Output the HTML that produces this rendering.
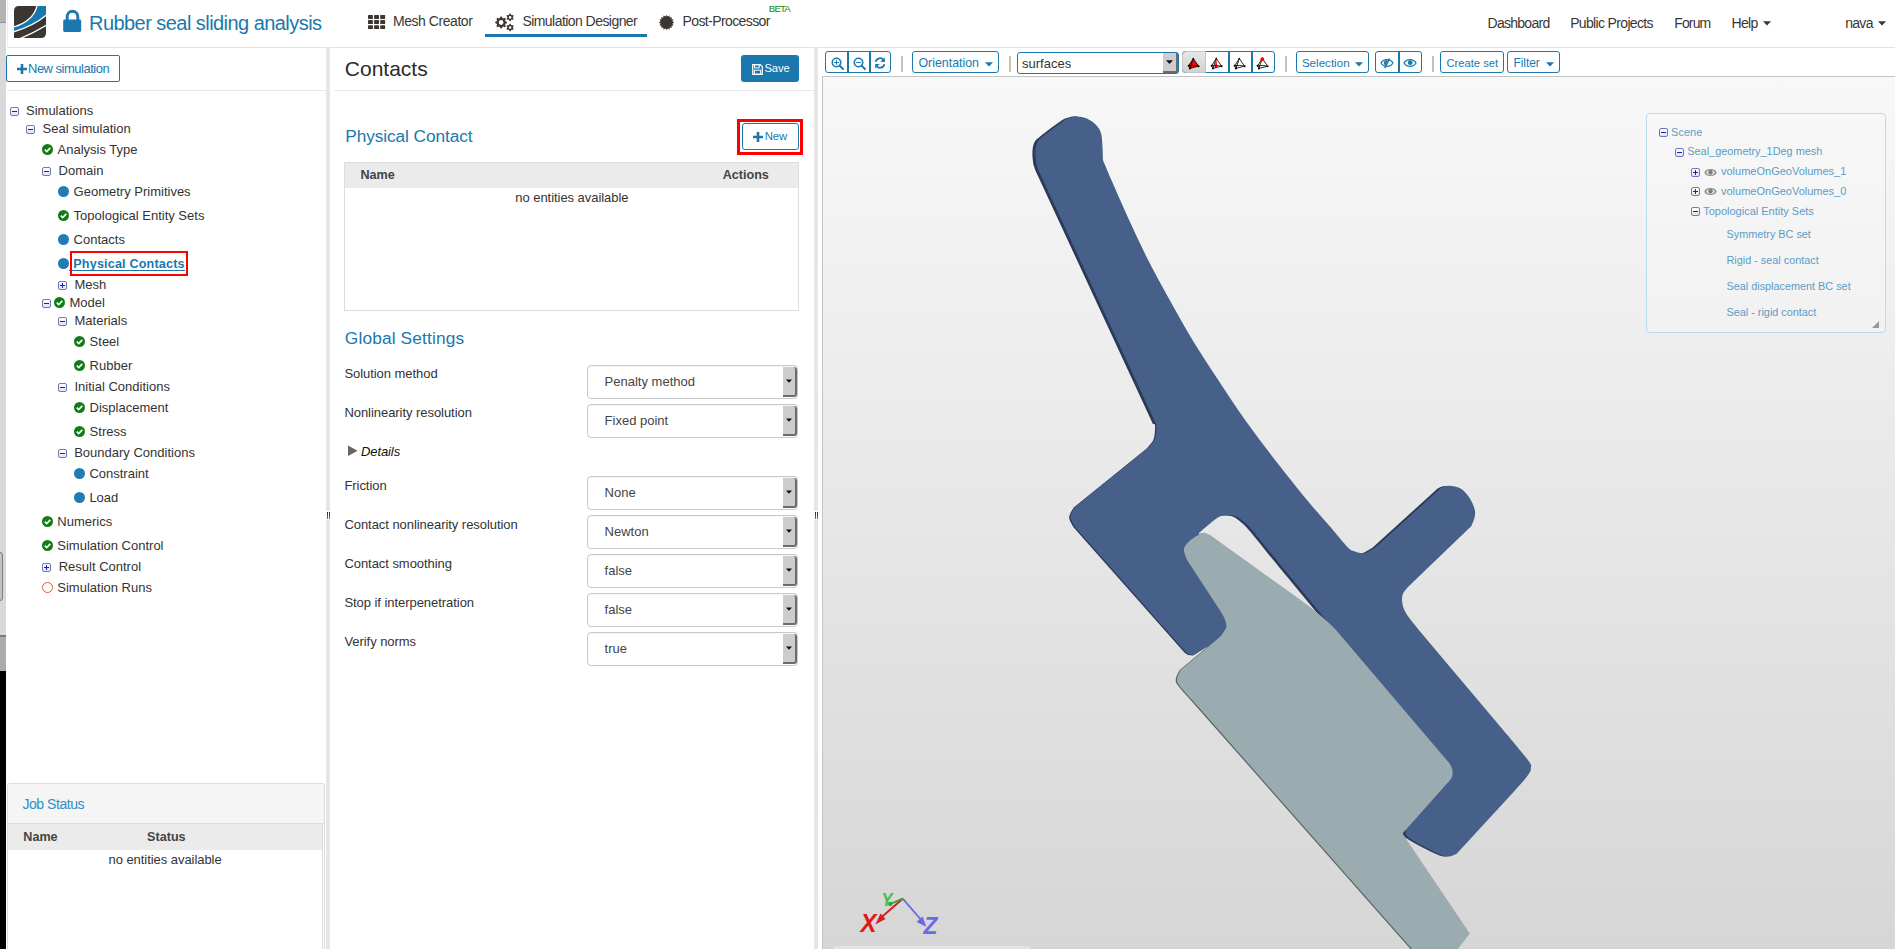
<!DOCTYPE html>
<html><head><meta charset="utf-8"><style>
html,body{margin:0;padding:0;width:1895px;height:949px;overflow:hidden;background:#fff;font-family:"Liberation Sans",sans-serif;}
.t{position:absolute;line-height:1;white-space:nowrap;}
</style></head><body>
<div style="position:absolute;left:0px;top:0px;width:6px;height:22px;background:#b3b3b3"></div>
<div style="position:absolute;left:0px;top:22px;width:6px;height:1px;background:#8f8f8f"></div>
<div style="position:absolute;left:0px;top:23px;width:6px;height:612px;background:#d9d9d9"></div>
<div style="position:absolute;left:0px;top:635px;width:6px;height:2px;background:#7a7a7a"></div>
<div style="position:absolute;left:0px;top:637px;width:6px;height:34px;background:#ababab"></div>
<div style="position:absolute;left:0px;top:671px;width:6px;height:278px;background:#000"></div>
<div style="position:absolute;left:-7px;top:552px;width:8px;height:47px;border:1.5px solid #7d7d7d;border-radius:3px;background:#c2c2c2"></div>
<div style="position:absolute;left:7px;top:0;width:1888px;height:48px;background:#fff;border-bottom:1px solid #e3e3e3;border-left:1px solid #eee;border-bottom-left-radius:3px;box-sizing:border-box"></div>
<svg style="position:absolute;left:14px;top:6px" width="32" height="32" viewBox="0 0 32 32">
<defs><clipPath id="lc"><path d="M5 0 H32 V27 Q32 32 27 32 H0 V5 Q0 0 5 0Z"/></clipPath></defs>
<g clip-path="url(#lc)">
<rect x="0" y="0" width="32" height="32" fill="#3b3632"/>
<path d="M23.2 -1 Q 20 15 -1 21.2 L -1 26 Q 20 20 33 8.6 L 33 -1 Z" fill="#1878ae"/>
<path d="M23.2 -1 Q 20 15 -1 21.2" stroke="#fff" stroke-width="1.3" fill="none"/>
<path d="M-1 26 Q 20 20 33 8.6" stroke="#fff" stroke-width="1.3" fill="none"/>
<path d="M33 19 Q 20 27 6 32.5" stroke="#fff" stroke-width="1.3" fill="none"/>
</g></svg>
<svg style="position:absolute;left:63px;top:9px" width="19" height="24" viewBox="0 0 19 24">
<path d="M4.2 11 V7.6 A5.3 5.3 0 0 1 14.8 7.6 V11" stroke="#1a78ae" stroke-width="2.9" fill="none"/>
<rect x="0.2" y="10.6" width="18" height="12.4" rx="1.4" fill="#1a78ae"/></svg>
<div class="t" style="left:89px;top:12.57px;font-size:20px;color:#1a78ae;letter-spacing:-0.55px">Rubber seal sliding analysis</div>
<svg style="position:absolute;left:368px;top:15px" width="18" height="15"><rect x="0.0" y="0.0" width="4.9" height="3.9" rx="0.6" fill="#3b3632"/><rect x="0.0" y="5.1" width="4.9" height="3.9" rx="0.6" fill="#3b3632"/><rect x="0.0" y="10.2" width="4.9" height="3.9" rx="0.6" fill="#3b3632"/><rect x="6.1" y="0.0" width="4.9" height="3.9" rx="0.6" fill="#3b3632"/><rect x="6.1" y="5.1" width="4.9" height="3.9" rx="0.6" fill="#3b3632"/><rect x="6.1" y="10.2" width="4.9" height="3.9" rx="0.6" fill="#3b3632"/><rect x="12.2" y="0.0" width="4.9" height="3.9" rx="0.6" fill="#3b3632"/><rect x="12.2" y="5.1" width="4.9" height="3.9" rx="0.6" fill="#3b3632"/><rect x="12.2" y="10.2" width="4.9" height="3.9" rx="0.6" fill="#3b3632"/></svg>
<div class="t" style="left:393px;top:14.25px;font-size:14px;color:#3b3632;letter-spacing:-0.45px">Mesh Creator</div>
<svg style="position:absolute;left:490px;top:8px" width="30" height="28"><path fill-rule="evenodd" fill="#3b3632" d="M10.51,8.53 L11.69,8.53 L12.44,10.10 L13.27,10.44 L14.91,9.86 L15.74,10.69 L15.16,12.33 L15.50,13.16 L17.07,13.91 L17.07,15.09 L15.50,15.84 L15.16,16.67 L15.74,18.31 L14.91,19.14 L13.27,18.56 L12.44,18.90 L11.69,20.47 L10.51,20.47 L9.76,18.90 L8.93,18.56 L7.29,19.14 L6.46,18.31 L7.04,16.67 L6.70,15.84 L5.13,15.09 L5.13,13.91 L6.70,13.16 L7.04,12.33 L6.46,10.69 L7.29,9.86 L8.93,10.44 L9.76,10.10 Z M13.5,14.5 A2.4,2.4 0 1 0 8.7,14.5 A2.4,2.4 0 1 0 13.5,14.5 Z"/><path fill-rule="evenodd" fill="#3b3632" d="M19.59,5.53 L20.61,5.53 L21.17,6.81 L21.80,7.18 L23.19,7.03 L23.70,7.91 L22.88,9.03 L22.88,9.77 L23.70,10.89 L23.19,11.77 L21.80,11.62 L21.17,11.99 L20.61,13.27 L19.59,13.27 L19.03,11.99 L18.40,11.62 L17.01,11.77 L16.50,10.89 L17.32,9.77 L17.32,9.03 L16.50,7.91 L17.01,7.03 L18.40,7.18 L19.03,6.81 Z M21.400000000000002,9.4 A1.3,1.3 0 1 0 18.8,9.4 A1.3,1.3 0 1 0 21.400000000000002,9.4 Z"/><path fill-rule="evenodd" fill="#3b3632" d="M19.59,15.63 L20.61,15.63 L21.17,16.91 L21.80,17.28 L23.19,17.13 L23.70,18.01 L22.88,19.13 L22.88,19.87 L23.70,20.99 L23.19,21.87 L21.80,21.72 L21.17,22.09 L20.61,23.37 L19.59,23.37 L19.03,22.09 L18.40,21.72 L17.01,21.87 L16.50,20.99 L17.32,19.87 L17.32,19.13 L16.50,18.01 L17.01,17.13 L18.40,17.28 L19.03,16.91 Z M21.400000000000002,19.5 A1.3,1.3 0 1 0 18.8,19.5 A1.3,1.3 0 1 0 21.400000000000002,19.5 Z"/></svg>
<div class="t" style="left:522.4px;top:14.25px;font-size:14px;color:#3b3632;letter-spacing:-0.55px">Simulation Designer</div>
<div style="position:absolute;left:485px;top:34px;width:162px;height:3px;background:#1a78ae"></div>
<svg style="position:absolute;left:652px;top:8px" width="29" height="29"><path fill="#3b3632" d="M22.10,14.50 L20.38,15.67 L21.52,17.41 L19.49,17.83 L19.87,19.87 L17.83,19.49 L17.41,21.52 L15.67,20.38 L14.50,22.10 L13.33,20.38 L11.59,21.52 L11.17,19.49 L9.13,19.87 L9.51,17.83 L7.48,17.41 L8.62,15.67 L6.90,14.50 L8.62,13.33 L7.48,11.59 L9.51,11.17 L9.13,9.13 L11.17,9.51 L11.59,7.48 L13.33,8.62 L14.50,6.90 L15.67,8.62 L17.41,7.48 L17.83,9.51 L19.87,9.13 L19.49,11.17 L21.52,11.59 L20.38,13.33 Z"/></svg>
<div class="t" style="left:682.5px;top:14.25px;font-size:14px;color:#3b3632;letter-spacing:-0.6px">Post-Processor</div>
<div class="t" style="left:768.8px;top:3.80px;font-size:9.8px;color:#0f8a12;letter-spacing:-0.95px">BETA</div>
<div class="t" style="left:1487.5px;top:15.65px;font-size:14px;color:#3b3632;letter-spacing:-0.72px">Dashboard</div>
<div class="t" style="left:1570.2px;top:15.65px;font-size:14px;color:#3b3632;letter-spacing:-0.66px">Public Projects</div>
<div class="t" style="left:1674.2px;top:15.65px;font-size:14px;color:#3b3632;letter-spacing:-0.85px">Forum</div>
<div class="t" style="left:1731.4px;top:15.65px;font-size:14px;color:#3b3632;letter-spacing:-0.6px">Help</div>
<svg style="position:absolute;left:1763px;top:21px" width="9" height="5"><path d="M0 0.3 H8 L4 4.5 Z" fill="#3b3632"/></svg>
<div class="t" style="left:1845.2px;top:15.65px;font-size:14px;color:#3b3632;letter-spacing:-0.7px">nava</div>
<svg style="position:absolute;left:1878px;top:21px" width="9" height="5"><path d="M0 0.3 H8 L4 4.5 Z" fill="#3b3632"/></svg>
<div style="position:absolute;left:326px;top:47px;width:4px;height:902px;background:#e6e6e6"></div>
<div style="position:absolute;left:7px;top:90px;width:319px;height:1px;background:#e5e5e5"></div>
<div style="position:absolute;left:6px;top:55px;width:114px;height:27px;border:1px solid #1a78ae;border-radius:2px;box-sizing:border-box;background:#fff"></div>
<svg style="position:absolute;left:17px;top:64px" width="10" height="10"><path d="M3.7 0H6.3V3.7H10V6.3H6.3V10H3.7V6.3H0V3.7H3.7Z" fill="#1a78ae"/></svg>
<div class="t" style="left:28px;top:62.00px;font-size:13px;color:#1a78ae;letter-spacing:-0.5px">New simulation</div>
<div style="position:absolute;left:10px;top:107px;width:9px;height:9px;box-sizing:border-box;border:1.2px solid #7079b8;border-radius:2px;background:linear-gradient(#fff,#e2e4ec)"></div><div style="position:absolute;left:12px;top:111px;width:5px;height:1.3px;background:#1a1acc"></div>
<div class="t" style="left:26px;top:104.00px;font-size:13px;color:#333;">Simulations</div>
<div style="position:absolute;left:26px;top:125px;width:9px;height:9px;box-sizing:border-box;border:1.2px solid #7079b8;border-radius:2px;background:linear-gradient(#fff,#e2e4ec)"></div><div style="position:absolute;left:28px;top:129px;width:5px;height:1.3px;background:#1a1acc"></div>
<div class="t" style="left:42.5px;top:122.00px;font-size:13px;color:#333;">Seal simulation</div>
<svg style="position:absolute;left:42px;top:144px" width="11" height="11" viewBox="0 0 11 11"><circle cx="5.5" cy="5.5" r="5.5" fill="#0f7d12"/><path d="M2.8 5.6 L4.7 7.5 L8.3 3.9" stroke="#fff" stroke-width="1.7" fill="none"/></svg>
<div class="t" style="left:57.5px;top:143.00px;font-size:13px;color:#333;">Analysis Type</div>
<div style="position:absolute;left:42px;top:167px;width:9px;height:9px;box-sizing:border-box;border:1.2px solid #7079b8;border-radius:2px;background:linear-gradient(#fff,#e2e4ec)"></div><div style="position:absolute;left:44px;top:171px;width:5px;height:1.3px;background:#1a1acc"></div>
<div class="t" style="left:58.6px;top:164.00px;font-size:13px;color:#333;">Domain</div>
<div style="position:absolute;left:58px;top:186px;width:11px;height:11px;border-radius:50%;background:#1f7cb5"></div>
<div class="t" style="left:73.6px;top:185.20px;font-size:13px;color:#333;">Geometry Primitives</div>
<svg style="position:absolute;left:58px;top:210px" width="11" height="11" viewBox="0 0 11 11"><circle cx="5.5" cy="5.5" r="5.5" fill="#0f7d12"/><path d="M2.8 5.6 L4.7 7.5 L8.3 3.9" stroke="#fff" stroke-width="1.7" fill="none"/></svg>
<div class="t" style="left:73.6px;top:209.00px;font-size:13px;color:#333;">Topological Entity Sets</div>
<div style="position:absolute;left:58px;top:234px;width:11px;height:11px;border-radius:50%;background:#1f7cb5"></div>
<div class="t" style="left:73.6px;top:232.70px;font-size:13px;color:#333;">Contacts</div>
<div style="position:absolute;left:58px;top:258px;width:11px;height:11px;border-radius:50%;background:#1f7cb5"></div>
<div style="position:absolute;left:58px;top:281px;width:9px;height:9px;box-sizing:border-box;border:1.2px solid #7079b8;border-radius:2px;background:linear-gradient(#fff,#e2e4ec)"></div><div style="position:absolute;left:60px;top:285px;width:5px;height:1.3px;background:#1a1acc"></div><div style="position:absolute;left:61.85px;top:283px;width:1.3px;height:5px;background:#1a1acc"></div>
<div class="t" style="left:74.5px;top:277.90px;font-size:13px;color:#333;">Mesh</div>
<div style="position:absolute;left:42px;top:299px;width:9px;height:9px;box-sizing:border-box;border:1.2px solid #7079b8;border-radius:2px;background:linear-gradient(#fff,#e2e4ec)"></div><div style="position:absolute;left:44px;top:303px;width:5px;height:1.3px;background:#1a1acc"></div>
<svg style="position:absolute;left:54px;top:297px" width="11" height="11" viewBox="0 0 11 11"><circle cx="5.5" cy="5.5" r="5.5" fill="#0f7d12"/><path d="M2.8 5.6 L4.7 7.5 L8.3 3.9" stroke="#fff" stroke-width="1.7" fill="none"/></svg>
<div class="t" style="left:69.5px;top:295.70px;font-size:13px;color:#333;">Model</div>
<div style="position:absolute;left:58px;top:317px;width:9px;height:9px;box-sizing:border-box;border:1.2px solid #7079b8;border-radius:2px;background:linear-gradient(#fff,#e2e4ec)"></div><div style="position:absolute;left:60px;top:321px;width:5px;height:1.3px;background:#1a1acc"></div>
<div class="t" style="left:74.5px;top:313.80px;font-size:13px;color:#333;">Materials</div>
<svg style="position:absolute;left:74px;top:336px" width="11" height="11" viewBox="0 0 11 11"><circle cx="5.5" cy="5.5" r="5.5" fill="#0f7d12"/><path d="M2.8 5.6 L4.7 7.5 L8.3 3.9" stroke="#fff" stroke-width="1.7" fill="none"/></svg>
<div class="t" style="left:89.6px;top:334.90px;font-size:13px;color:#333;">Steel</div>
<svg style="position:absolute;left:74px;top:360px" width="11" height="11" viewBox="0 0 11 11"><circle cx="5.5" cy="5.5" r="5.5" fill="#0f7d12"/><path d="M2.8 5.6 L4.7 7.5 L8.3 3.9" stroke="#fff" stroke-width="1.7" fill="none"/></svg>
<div class="t" style="left:89.6px;top:358.90px;font-size:13px;color:#333;">Rubber</div>
<div style="position:absolute;left:58px;top:383px;width:9px;height:9px;box-sizing:border-box;border:1.2px solid #7079b8;border-radius:2px;background:linear-gradient(#fff,#e2e4ec)"></div><div style="position:absolute;left:60px;top:387px;width:5px;height:1.3px;background:#1a1acc"></div>
<div class="t" style="left:74.5px;top:379.80px;font-size:13px;color:#333;">Initial Conditions</div>
<svg style="position:absolute;left:74px;top:402px" width="11" height="11" viewBox="0 0 11 11"><circle cx="5.5" cy="5.5" r="5.5" fill="#0f7d12"/><path d="M2.8 5.6 L4.7 7.5 L8.3 3.9" stroke="#fff" stroke-width="1.7" fill="none"/></svg>
<div class="t" style="left:89.6px;top:400.60px;font-size:13px;color:#333;">Displacement</div>
<svg style="position:absolute;left:74px;top:426px" width="11" height="11" viewBox="0 0 11 11"><circle cx="5.5" cy="5.5" r="5.5" fill="#0f7d12"/><path d="M2.8 5.6 L4.7 7.5 L8.3 3.9" stroke="#fff" stroke-width="1.7" fill="none"/></svg>
<div class="t" style="left:89.6px;top:424.60px;font-size:13px;color:#333;">Stress</div>
<div style="position:absolute;left:58px;top:449px;width:9px;height:9px;box-sizing:border-box;border:1.2px solid #7079b8;border-radius:2px;background:linear-gradient(#fff,#e2e4ec)"></div><div style="position:absolute;left:60px;top:453px;width:5px;height:1.3px;background:#1a1acc"></div>
<div class="t" style="left:74.2px;top:445.90px;font-size:13px;color:#333;">Boundary Conditions</div>
<div style="position:absolute;left:74px;top:468px;width:11px;height:11px;border-radius:50%;background:#1f7cb5"></div>
<div class="t" style="left:89.4px;top:466.90px;font-size:13px;color:#333;">Constraint</div>
<div style="position:absolute;left:74px;top:492px;width:11px;height:11px;border-radius:50%;background:#1f7cb5"></div>
<div class="t" style="left:89.4px;top:491.00px;font-size:13px;color:#333;">Load</div>
<svg style="position:absolute;left:42px;top:516px" width="11" height="11" viewBox="0 0 11 11"><circle cx="5.5" cy="5.5" r="5.5" fill="#0f7d12"/><path d="M2.8 5.6 L4.7 7.5 L8.3 3.9" stroke="#fff" stroke-width="1.7" fill="none"/></svg>
<div class="t" style="left:57.3px;top:515.00px;font-size:13px;color:#333;">Numerics</div>
<svg style="position:absolute;left:42px;top:540px" width="11" height="11" viewBox="0 0 11 11"><circle cx="5.5" cy="5.5" r="5.5" fill="#0f7d12"/><path d="M2.8 5.6 L4.7 7.5 L8.3 3.9" stroke="#fff" stroke-width="1.7" fill="none"/></svg>
<div class="t" style="left:57.3px;top:539.00px;font-size:13px;color:#333;">Simulation Control</div>
<div style="position:absolute;left:42px;top:563px;width:9px;height:9px;box-sizing:border-box;border:1.2px solid #7079b8;border-radius:2px;background:linear-gradient(#fff,#e2e4ec)"></div><div style="position:absolute;left:44px;top:567px;width:5px;height:1.3px;background:#1a1acc"></div><div style="position:absolute;left:45.85px;top:565px;width:1.3px;height:5px;background:#1a1acc"></div>
<div class="t" style="left:58.7px;top:560.00px;font-size:13px;color:#333;">Result Control</div>
<div style="position:absolute;left:42px;top:582px;width:11px;height:11px;border-radius:50%;border:1.6px solid #e85a1c;box-sizing:border-box"></div>
<div class="t" style="left:57.3px;top:580.80px;font-size:13px;color:#333;">Simulation Runs</div>
<div class="t" style="left:73.3px;top:257.93px;font-size:12.6px;color:#1a78ae;font-weight:bold;letter-spacing:0.17px">Physical Contacts</div>
<div style="position:absolute;left:69px;top:270px;width:116px;height:1px;background:#1a78ae"></div>
<div style="position:absolute;left:70px;top:251px;width:118px;height:25px;border:2px solid #f00;box-sizing:border-box"></div>
<div style="position:absolute;left:7px;top:783px;width:318px;height:170px;border:1px solid #ddd;border-radius:3px;box-sizing:border-box;background:#fff"></div>
<div style="position:absolute;left:8px;top:784px;width:316px;height:39px;background:#f5f5f5;border-radius:3px 3px 0 0"></div>
<div style="position:absolute;left:8px;top:823px;width:316px;height:1px;background:#dcdcdc"></div>
<div class="t" style="left:22.4px;top:797.05px;font-size:14px;color:#2a8fc6;letter-spacing:-0.45px">Job Status</div>
<div style="position:absolute;left:8px;top:824px;width:314px;height:26px;background:#ebebeb"></div>
<div style="position:absolute;left:322px;top:824px;width:1px;height:125px;background:#ddd"></div>
<div class="t" style="left:23.3px;top:831.43px;font-size:12.6px;color:#444;font-weight:bold">Name</div>
<div class="t" style="left:147.1px;top:831.43px;font-size:12.6px;color:#444;font-weight:bold">Status</div>
<div class="t" style="left:108.5px;top:852.60px;font-size:13px;color:#333;letter-spacing:-0.05px">no entities available</div>
<div style="position:absolute;left:814px;top:47px;width:4px;height:902px;background:#e6e6e6"></div>
<div style="position:absolute;left:326px;top:511px;width:4px;height:9px;background:#fff"></div>
<div style="position:absolute;left:326.5px;top:512px;width:1.2px;height:7px;background:linear-gradient(#222,#777)"></div>
<div style="position:absolute;left:328.5px;top:512px;width:1.2px;height:7px;background:linear-gradient(#222,#777)"></div>
<div style="position:absolute;left:814px;top:511px;width:4px;height:9px;background:#fff"></div>
<div style="position:absolute;left:814.5px;top:512px;width:1.2px;height:7px;background:linear-gradient(#222,#777)"></div>
<div style="position:absolute;left:816.5px;top:512px;width:1.2px;height:7px;background:linear-gradient(#222,#777)"></div>
<div style="position:absolute;left:334px;top:90px;width:480px;height:1px;background:#e8e8e8"></div>
<div class="t" style="left:344.8px;top:58.22px;font-size:21px;color:#2b2b2b;">Contacts</div>
<div style="position:absolute;left:741px;top:55px;width:58px;height:27px;background:#1a78ae;border-radius:3px"></div>
<svg style="position:absolute;left:752px;top:64px" width="11" height="11" viewBox="0 0 11 11">
<path d="M0.7 0.7 H8.3 L10.3 2.7 V10.3 H0.7 Z" fill="none" stroke="#fff" stroke-width="1.2"/>
<rect x="2.6" y="0.7" width="4.6" height="3.2" fill="none" stroke="#fff" stroke-width="1"/>
<rect x="2.4" y="6.2" width="6.2" height="4" fill="none" stroke="#fff" stroke-width="1"/></svg>
<div class="t" style="left:764.5px;top:63.42px;font-size:11.2px;color:#fff;letter-spacing:-0.1px">Save</div>
<div class="t" style="left:345.3px;top:127.86px;font-size:17.3px;color:#1a78ae;letter-spacing:-0.1px">Physical Contact</div>
<div style="position:absolute;left:737px;top:119px;width:66px;height:36px;border:3px solid #f00;box-sizing:border-box"></div>
<div style="position:absolute;left:742px;top:123px;width:57px;height:27px;border:1px solid #1a78ae;border-radius:3px;box-sizing:border-box;background:#fff"></div>
<svg style="position:absolute;left:753px;top:132px" width="10" height="10"><path d="M3.7 0H6.3V3.7H10V6.3H6.3V10H3.7V6.3H0V3.7H3.7Z" fill="#1a78ae"/></svg>
<div class="t" style="left:764.7px;top:131.15px;font-size:11.4px;color:#1a78ae;letter-spacing:-0.1px">New</div>
<div style="position:absolute;left:344px;top:162px;width:455px;height:149px;border:1px solid #ddd;box-sizing:border-box;background:#fff"></div>
<div style="position:absolute;left:345px;top:163px;width:453px;height:25px;background:#ebebeb"></div>
<div class="t" style="left:360.5px;top:168.83px;font-size:12.6px;color:#444;font-weight:bold">Name</div>
<div class="t" style="left:722.7px;top:168.83px;font-size:12.6px;color:#444;font-weight:bold">Actions</div>
<div class="t" style="left:515.3px;top:190.60px;font-size:13px;color:#333;letter-spacing:-0.05px">no entities available</div>
<div class="t" style="left:344.8px;top:330.16px;font-size:17.3px;color:#1a78ae;letter-spacing:0.15px">Global Settings</div>
<div class="t" style="left:344.4px;top:366.70px;font-size:13px;color:#333;letter-spacing:-0.05px">Solution method</div>
<div style="position:absolute;left:587px;top:365px;width:211px;height:33.5px;border:1px solid #c9c9c9;border-radius:4px;box-sizing:border-box;background:#fff;box-shadow:inset 0 1px 1px rgba(0,0,0,0.04)"></div>
<div style="position:absolute;left:783px;top:367px;width:14px;height:29.5px;background:#cdcdcd;border-right:2px solid #6b6b6b;border-bottom:2px solid #6b6b6b;box-sizing:border-box;border-radius:0 3px 3px 0"></div>
<svg style="position:absolute;left:786px;top:379px" width="7" height="5"><path d="M0 0.5 H6 L3 3.8Z" fill="#111"/></svg>
<div class="t" style="left:604.6px;top:374.80px;font-size:13px;color:#444;">Penalty method</div>
<div class="t" style="left:344.4px;top:405.70px;font-size:13px;color:#333;letter-spacing:-0.05px">Nonlinearity resolution</div>
<div style="position:absolute;left:587px;top:404px;width:211px;height:33.5px;border:1px solid #c9c9c9;border-radius:4px;box-sizing:border-box;background:#fff;box-shadow:inset 0 1px 1px rgba(0,0,0,0.04)"></div>
<div style="position:absolute;left:783px;top:406px;width:14px;height:29.5px;background:#cdcdcd;border-right:2px solid #6b6b6b;border-bottom:2px solid #6b6b6b;box-sizing:border-box;border-radius:0 3px 3px 0"></div>
<svg style="position:absolute;left:786px;top:418px" width="7" height="5"><path d="M0 0.5 H6 L3 3.8Z" fill="#111"/></svg>
<div class="t" style="left:604.6px;top:413.80px;font-size:13px;color:#444;">Fixed point</div>
<div class="t" style="left:344.4px;top:478.80px;font-size:13px;color:#333;letter-spacing:-0.05px">Friction</div>
<div style="position:absolute;left:587px;top:476px;width:211px;height:33.5px;border:1px solid #c9c9c9;border-radius:4px;box-sizing:border-box;background:#fff;box-shadow:inset 0 1px 1px rgba(0,0,0,0.04)"></div>
<div style="position:absolute;left:783px;top:478px;width:14px;height:29.5px;background:#cdcdcd;border-right:2px solid #6b6b6b;border-bottom:2px solid #6b6b6b;box-sizing:border-box;border-radius:0 3px 3px 0"></div>
<svg style="position:absolute;left:786px;top:490px" width="7" height="5"><path d="M0 0.5 H6 L3 3.8Z" fill="#111"/></svg>
<div class="t" style="left:604.6px;top:485.80px;font-size:13px;color:#444;">None</div>
<div class="t" style="left:344.4px;top:517.80px;font-size:13px;color:#333;letter-spacing:-0.05px">Contact nonlinearity resolution</div>
<div style="position:absolute;left:587px;top:515px;width:211px;height:33.5px;border:1px solid #c9c9c9;border-radius:4px;box-sizing:border-box;background:#fff;box-shadow:inset 0 1px 1px rgba(0,0,0,0.04)"></div>
<div style="position:absolute;left:783px;top:517px;width:14px;height:29.5px;background:#cdcdcd;border-right:2px solid #6b6b6b;border-bottom:2px solid #6b6b6b;box-sizing:border-box;border-radius:0 3px 3px 0"></div>
<svg style="position:absolute;left:786px;top:529px" width="7" height="5"><path d="M0 0.5 H6 L3 3.8Z" fill="#111"/></svg>
<div class="t" style="left:604.6px;top:524.80px;font-size:13px;color:#444;">Newton</div>
<div class="t" style="left:344.4px;top:556.80px;font-size:13px;color:#333;letter-spacing:-0.05px">Contact smoothing</div>
<div style="position:absolute;left:587px;top:554px;width:211px;height:33.5px;border:1px solid #c9c9c9;border-radius:4px;box-sizing:border-box;background:#fff;box-shadow:inset 0 1px 1px rgba(0,0,0,0.04)"></div>
<div style="position:absolute;left:783px;top:556px;width:14px;height:29.5px;background:#cdcdcd;border-right:2px solid #6b6b6b;border-bottom:2px solid #6b6b6b;box-sizing:border-box;border-radius:0 3px 3px 0"></div>
<svg style="position:absolute;left:786px;top:568px" width="7" height="5"><path d="M0 0.5 H6 L3 3.8Z" fill="#111"/></svg>
<div class="t" style="left:604.6px;top:563.80px;font-size:13px;color:#444;">false</div>
<div class="t" style="left:344.4px;top:595.80px;font-size:13px;color:#333;letter-spacing:-0.05px">Stop if interpenetration</div>
<div style="position:absolute;left:587px;top:593px;width:211px;height:33.5px;border:1px solid #c9c9c9;border-radius:4px;box-sizing:border-box;background:#fff;box-shadow:inset 0 1px 1px rgba(0,0,0,0.04)"></div>
<div style="position:absolute;left:783px;top:595px;width:14px;height:29.5px;background:#cdcdcd;border-right:2px solid #6b6b6b;border-bottom:2px solid #6b6b6b;box-sizing:border-box;border-radius:0 3px 3px 0"></div>
<svg style="position:absolute;left:786px;top:607px" width="7" height="5"><path d="M0 0.5 H6 L3 3.8Z" fill="#111"/></svg>
<div class="t" style="left:604.6px;top:602.80px;font-size:13px;color:#444;">false</div>
<div class="t" style="left:344.4px;top:634.80px;font-size:13px;color:#333;letter-spacing:-0.05px">Verify norms</div>
<div style="position:absolute;left:587px;top:632px;width:211px;height:33.5px;border:1px solid #c9c9c9;border-radius:4px;box-sizing:border-box;background:#fff;box-shadow:inset 0 1px 1px rgba(0,0,0,0.04)"></div>
<div style="position:absolute;left:783px;top:634px;width:14px;height:29.5px;background:#cdcdcd;border-right:2px solid #6b6b6b;border-bottom:2px solid #6b6b6b;box-sizing:border-box;border-radius:0 3px 3px 0"></div>
<svg style="position:absolute;left:786px;top:646px" width="7" height="5"><path d="M0 0.5 H6 L3 3.8Z" fill="#111"/></svg>
<div class="t" style="left:604.6px;top:641.80px;font-size:13px;color:#444;">true</div>
<svg style="position:absolute;left:348px;top:445px" width="10" height="12"><path d="M0 0.6 L9.6 5.8 L0 11Z" fill="#666"/></svg>
<div class="t" style="left:361px;top:444.60px;font-size:13px;color:#111;font-style:italic;letter-spacing:-0.1px">Details</div>
<div style="position:absolute;left:822px;top:76px;width:1073px;height:873px;border-top:1px solid #c4c4c4;border-left:1px solid #c4c4c4;box-sizing:border-box;background:linear-gradient(#f8f8f8,#d6d6d6)"></div>
<svg style="position:absolute;left:0;top:0" width="1895" height="949" viewBox="0 0 1895 949">
<defs><clipPath id="vc"><rect x="824" y="78" width="1071" height="871"/></clipPath><clipPath id="dc"><path clip-rule="evenodd" d="M824 78 H1895 V949 H824Z M1050 500 L1147 424 L1160 424 L1250 600 L1210 690 L1050 560 Z"/></clipPath><clipPath id="da"><path d="M1050 500 L1147 424 L1160 424 L1250 600 L1210 690 L1050 560 Z"/></clipPath></defs>
<g clip-path="url(#vc)">
<path d="M 1186.9 559.7 C 1186.40 558.02 1183.63 552.55 1183.90 549.60 C 1184.17 546.65 1186.18 544.38 1188.50 542.00 C 1190.82 539.62 1195.27 536.83 1197.80 535.30 C 1200.33 533.77 1201.58 532.80 1203.70 532.80 C 1205.82 532.80 1209.37 534.88 1210.50 535.30 L 1300 599.6 Q 1322 615.4 1336 630 L 1450 764 Q 1455 772 1451 779 L 1402.5 833.6 L 1469.8 933.4 L 1457.9 949 L 1412 949 L 1192.2 700 C 1190.00 697.48 1181.52 688.53 1179.00 684.90 C 1176.48 681.27 1176.78 680.73 1177.10 678.20 C 1177.42 675.67 1180.27 671.12 1180.90 669.70 L 1221 636 C 1221.87 634.52 1225.62 630.02 1226.20 627.10 C 1226.78 624.18 1225.58 621.35 1224.50 618.50 C 1223.42 615.65 1220.50 611.42 1219.70 610.00 Z" fill="#56625f" transform="translate(-1.2,0.4)"/>
<g clip-path="url(#dc)"><path d="M 1035.5 157 C 1035.52 155.67 1035.22 151.58 1035.60 149.00 C 1035.98 146.42 1036.48 143.67 1037.80 141.50 C 1039.12 139.33 1039.10 139.48 1043.50 136.00 C 1047.90 132.52 1059.45 123.72 1064.20 120.60 C 1068.95 117.48 1069.82 118.00 1072.00 117.30 C 1074.18 116.60 1074.80 116.18 1077.30 116.40 C 1079.80 116.62 1083.78 117.07 1087.00 118.60 C 1090.22 120.13 1094.23 123.02 1096.60 125.60 C 1098.97 128.18 1100.22 130.50 1101.20 134.10 C 1102.18 137.70 1102.20 142.83 1102.50 147.20 C 1102.80 151.57 1102.92 158.12 1103.00 160.30 C 1104.40 163.58 1107.05 170.05 1111.40 180.00 C 1115.75 189.95 1122.98 206.67 1129.10 220.00 C 1135.22 233.33 1141.33 246.67 1148.10 260.00 C 1154.87 273.33 1162.30 286.67 1169.70 300.00 C 1177.10 313.33 1184.42 326.67 1192.50 340.00 C 1200.58 353.33 1209.43 366.67 1218.20 380.00 C 1226.97 393.33 1235.63 406.67 1245.10 420.00 C 1254.57 433.33 1264.68 446.67 1275.00 460.00 C 1285.32 473.33 1297.83 488.90 1307.00 500.00 C 1316.17 511.10 1323.22 518.72 1330.00 526.60 C 1336.78 534.48 1343.65 543.18 1347.70 547.30 C 1351.75 551.42 1351.97 550.30 1354.30 551.30 C 1356.63 552.30 1359.60 553.12 1361.70 553.30 C 1363.80 553.48 1364.57 553.40 1366.90 552.40 C 1369.23 551.40 1374.23 548.15 1375.70 547.30 L 1436 492.5 C 1437.02 491.68 1439.85 488.72 1442.10 487.60 C 1444.35 486.48 1446.42 485.63 1449.50 485.80 C 1452.58 485.97 1457.25 486.57 1460.60 488.60 C 1463.95 490.63 1467.27 494.58 1469.60 498.00 C 1471.93 501.42 1473.77 505.90 1474.60 509.10 C 1475.43 512.30 1475.13 514.38 1474.60 517.20 C 1474.07 520.02 1471.93 524.53 1471.40 526.00 L 1407.7 587.3 C 1406.90 588.40 1403.82 591.45 1402.90 593.90 C 1401.98 596.35 1401.70 598.80 1402.20 602.00 C 1402.70 605.20 1403.13 608.43 1405.90 613.10 C 1408.67 617.77 1416.65 627.18 1418.80 630.00 L 1494.7 720 C 1500.12 726.52 1521.17 751.12 1527.20 759.10 C 1533.23 767.08 1530.78 765.20 1530.90 767.90 C 1531.02 770.60 1530.48 771.62 1527.90 775.30 C 1525.32 778.98 1517.48 787.55 1515.40 790.00 L 1456.4 853.9 C 1454.92 854.32 1450.95 856.65 1447.50 856.40 C 1444.05 856.15 1441.97 855.40 1435.70 852.40 C 1429.43 849.40 1414.93 841.97 1409.90 838.40 C 1404.87 834.83 1405.62 833.35 1405.50 831.00 C 1405.38 828.65 1408.58 825.42 1409.20 824.30 L 1452 772 L 1328 622.2 C 1319.42 611.83 1289.08 575.28 1276.50 560.00 C 1263.92 544.72 1257.92 536.83 1252.50 530.50 C 1247.08 524.17 1246.83 524.38 1244.00 522.00 C 1241.17 519.62 1238.98 517.27 1235.50 516.20 C 1232.02 515.13 1226.72 514.88 1223.10 515.60 C 1219.48 516.32 1217.87 517.57 1213.80 520.50 C 1209.73 523.43 1201.22 531.08 1198.70 533.20 L 1232 572 L 1250 625 L 1205 648 L 1194.1 655 L 1189.4 654.5 Q 1186 653 1183.7 649.8 L 1075 527 C 1074.25 525.33 1070.50 520.33 1070.50 517.00 C 1070.50 513.67 1074.25 508.67 1075.00 507.00 L 1148 448 C 1149.17 446.42 1153.58 442.33 1155.00 438.50 C 1156.42 434.67 1156.25 427.25 1156.50 425.00 L 1038.3 170 Q 1035.5 163 1035.5 157 Z" fill="#2b3a57" transform="translate(-3,0.2)"/></g><g clip-path="url(#da)"><path d="M 1035.5 157 C 1035.52 155.67 1035.22 151.58 1035.60 149.00 C 1035.98 146.42 1036.48 143.67 1037.80 141.50 C 1039.12 139.33 1039.10 139.48 1043.50 136.00 C 1047.90 132.52 1059.45 123.72 1064.20 120.60 C 1068.95 117.48 1069.82 118.00 1072.00 117.30 C 1074.18 116.60 1074.80 116.18 1077.30 116.40 C 1079.80 116.62 1083.78 117.07 1087.00 118.60 C 1090.22 120.13 1094.23 123.02 1096.60 125.60 C 1098.97 128.18 1100.22 130.50 1101.20 134.10 C 1102.18 137.70 1102.20 142.83 1102.50 147.20 C 1102.80 151.57 1102.92 158.12 1103.00 160.30 C 1104.40 163.58 1107.05 170.05 1111.40 180.00 C 1115.75 189.95 1122.98 206.67 1129.10 220.00 C 1135.22 233.33 1141.33 246.67 1148.10 260.00 C 1154.87 273.33 1162.30 286.67 1169.70 300.00 C 1177.10 313.33 1184.42 326.67 1192.50 340.00 C 1200.58 353.33 1209.43 366.67 1218.20 380.00 C 1226.97 393.33 1235.63 406.67 1245.10 420.00 C 1254.57 433.33 1264.68 446.67 1275.00 460.00 C 1285.32 473.33 1297.83 488.90 1307.00 500.00 C 1316.17 511.10 1323.22 518.72 1330.00 526.60 C 1336.78 534.48 1343.65 543.18 1347.70 547.30 C 1351.75 551.42 1351.97 550.30 1354.30 551.30 C 1356.63 552.30 1359.60 553.12 1361.70 553.30 C 1363.80 553.48 1364.57 553.40 1366.90 552.40 C 1369.23 551.40 1374.23 548.15 1375.70 547.30 L 1436 492.5 C 1437.02 491.68 1439.85 488.72 1442.10 487.60 C 1444.35 486.48 1446.42 485.63 1449.50 485.80 C 1452.58 485.97 1457.25 486.57 1460.60 488.60 C 1463.95 490.63 1467.27 494.58 1469.60 498.00 C 1471.93 501.42 1473.77 505.90 1474.60 509.10 C 1475.43 512.30 1475.13 514.38 1474.60 517.20 C 1474.07 520.02 1471.93 524.53 1471.40 526.00 L 1407.7 587.3 C 1406.90 588.40 1403.82 591.45 1402.90 593.90 C 1401.98 596.35 1401.70 598.80 1402.20 602.00 C 1402.70 605.20 1403.13 608.43 1405.90 613.10 C 1408.67 617.77 1416.65 627.18 1418.80 630.00 L 1494.7 720 C 1500.12 726.52 1521.17 751.12 1527.20 759.10 C 1533.23 767.08 1530.78 765.20 1530.90 767.90 C 1531.02 770.60 1530.48 771.62 1527.90 775.30 C 1525.32 778.98 1517.48 787.55 1515.40 790.00 L 1456.4 853.9 C 1454.92 854.32 1450.95 856.65 1447.50 856.40 C 1444.05 856.15 1441.97 855.40 1435.70 852.40 C 1429.43 849.40 1414.93 841.97 1409.90 838.40 C 1404.87 834.83 1405.62 833.35 1405.50 831.00 C 1405.38 828.65 1408.58 825.42 1409.20 824.30 L 1452 772 L 1328 622.2 C 1319.42 611.83 1289.08 575.28 1276.50 560.00 C 1263.92 544.72 1257.92 536.83 1252.50 530.50 C 1247.08 524.17 1246.83 524.38 1244.00 522.00 C 1241.17 519.62 1238.98 517.27 1235.50 516.20 C 1232.02 515.13 1226.72 514.88 1223.10 515.60 C 1219.48 516.32 1217.87 517.57 1213.80 520.50 C 1209.73 523.43 1201.22 531.08 1198.70 533.20 L 1232 572 L 1250 625 L 1205 648 L 1194.1 655 L 1189.4 654.5 Q 1186 653 1183.7 649.8 L 1075 527 C 1074.25 525.33 1070.50 520.33 1070.50 517.00 C 1070.50 513.67 1074.25 508.67 1075.00 507.00 L 1148 448 C 1149.17 446.42 1153.58 442.33 1155.00 438.50 C 1156.42 434.67 1156.25 427.25 1156.50 425.00 L 1038.3 170 Q 1035.5 163 1035.5 157 Z" fill="#2b3a57" transform="translate(-1.3,0.5)"/></g>
<path d="M 1035.5 157 C 1035.52 155.67 1035.22 151.58 1035.60 149.00 C 1035.98 146.42 1036.48 143.67 1037.80 141.50 C 1039.12 139.33 1039.10 139.48 1043.50 136.00 C 1047.90 132.52 1059.45 123.72 1064.20 120.60 C 1068.95 117.48 1069.82 118.00 1072.00 117.30 C 1074.18 116.60 1074.80 116.18 1077.30 116.40 C 1079.80 116.62 1083.78 117.07 1087.00 118.60 C 1090.22 120.13 1094.23 123.02 1096.60 125.60 C 1098.97 128.18 1100.22 130.50 1101.20 134.10 C 1102.18 137.70 1102.20 142.83 1102.50 147.20 C 1102.80 151.57 1102.92 158.12 1103.00 160.30 C 1104.40 163.58 1107.05 170.05 1111.40 180.00 C 1115.75 189.95 1122.98 206.67 1129.10 220.00 C 1135.22 233.33 1141.33 246.67 1148.10 260.00 C 1154.87 273.33 1162.30 286.67 1169.70 300.00 C 1177.10 313.33 1184.42 326.67 1192.50 340.00 C 1200.58 353.33 1209.43 366.67 1218.20 380.00 C 1226.97 393.33 1235.63 406.67 1245.10 420.00 C 1254.57 433.33 1264.68 446.67 1275.00 460.00 C 1285.32 473.33 1297.83 488.90 1307.00 500.00 C 1316.17 511.10 1323.22 518.72 1330.00 526.60 C 1336.78 534.48 1343.65 543.18 1347.70 547.30 C 1351.75 551.42 1351.97 550.30 1354.30 551.30 C 1356.63 552.30 1359.60 553.12 1361.70 553.30 C 1363.80 553.48 1364.57 553.40 1366.90 552.40 C 1369.23 551.40 1374.23 548.15 1375.70 547.30 L 1436 492.5 C 1437.02 491.68 1439.85 488.72 1442.10 487.60 C 1444.35 486.48 1446.42 485.63 1449.50 485.80 C 1452.58 485.97 1457.25 486.57 1460.60 488.60 C 1463.95 490.63 1467.27 494.58 1469.60 498.00 C 1471.93 501.42 1473.77 505.90 1474.60 509.10 C 1475.43 512.30 1475.13 514.38 1474.60 517.20 C 1474.07 520.02 1471.93 524.53 1471.40 526.00 L 1407.7 587.3 C 1406.90 588.40 1403.82 591.45 1402.90 593.90 C 1401.98 596.35 1401.70 598.80 1402.20 602.00 C 1402.70 605.20 1403.13 608.43 1405.90 613.10 C 1408.67 617.77 1416.65 627.18 1418.80 630.00 L 1494.7 720 C 1500.12 726.52 1521.17 751.12 1527.20 759.10 C 1533.23 767.08 1530.78 765.20 1530.90 767.90 C 1531.02 770.60 1530.48 771.62 1527.90 775.30 C 1525.32 778.98 1517.48 787.55 1515.40 790.00 L 1456.4 853.9 C 1454.92 854.32 1450.95 856.65 1447.50 856.40 C 1444.05 856.15 1441.97 855.40 1435.70 852.40 C 1429.43 849.40 1414.93 841.97 1409.90 838.40 C 1404.87 834.83 1405.62 833.35 1405.50 831.00 C 1405.38 828.65 1408.58 825.42 1409.20 824.30 L 1452 772 L 1328 622.2 C 1319.42 611.83 1289.08 575.28 1276.50 560.00 C 1263.92 544.72 1257.92 536.83 1252.50 530.50 C 1247.08 524.17 1246.83 524.38 1244.00 522.00 C 1241.17 519.62 1238.98 517.27 1235.50 516.20 C 1232.02 515.13 1226.72 514.88 1223.10 515.60 C 1219.48 516.32 1217.87 517.57 1213.80 520.50 C 1209.73 523.43 1201.22 531.08 1198.70 533.20 L 1232 572 L 1250 625 L 1205 648 L 1194.1 655 L 1189.4 654.5 Q 1186 653 1183.7 649.8 L 1075 527 C 1074.25 525.33 1070.50 520.33 1070.50 517.00 C 1070.50 513.67 1074.25 508.67 1075.00 507.00 L 1148 448 C 1149.17 446.42 1153.58 442.33 1155.00 438.50 C 1156.42 434.67 1156.25 427.25 1156.50 425.00 L 1038.3 170 Q 1035.5 163 1035.5 157 Z" fill="#466089"/>
<path d="M 1186.9 559.7 C 1186.40 558.02 1183.63 552.55 1183.90 549.60 C 1184.17 546.65 1186.18 544.38 1188.50 542.00 C 1190.82 539.62 1195.27 536.83 1197.80 535.30 C 1200.33 533.77 1201.58 532.80 1203.70 532.80 C 1205.82 532.80 1209.37 534.88 1210.50 535.30 L 1300 599.6 Q 1322 615.4 1336 630 L 1450 764 Q 1455 772 1451 779 L 1402.5 833.6 L 1469.8 933.4 L 1457.9 949 L 1412 949 L 1192.2 700 C 1190.00 697.48 1181.52 688.53 1179.00 684.90 C 1176.48 681.27 1176.78 680.73 1177.10 678.20 C 1177.42 675.67 1180.27 671.12 1180.90 669.70 L 1221 636 C 1221.87 634.52 1225.62 630.02 1226.20 627.10 C 1226.78 624.18 1225.58 621.35 1224.50 618.50 C 1223.42 615.65 1220.50 611.42 1219.70 610.00 Z" fill="#9aacb0"/>
</g></svg>
<div style="position:absolute;left:825px;top:51px;width:66px;height:22px;border:1.5px solid #1a78ae;border-radius:3px;box-sizing:border-box;background:#fff"></div>
<div style="position:absolute;left:847px;top:51px;width:1.5px;height:22px;background:#1a78ae"></div>
<div style="position:absolute;left:869px;top:51px;width:1.5px;height:22px;background:#1a78ae"></div>
<svg style="position:absolute;left:830.5px;top:56.5px" width="14" height="14" viewBox="0 0 14 14"><circle cx="5.5" cy="5.5" r="4.2" stroke="#1a78ae" stroke-width="1.6" fill="none"/><path d="M8.6 8.6 L12 12" stroke="#1a78ae" stroke-width="2" stroke-linecap="round"/><path d="M3.2 5.5 H7.8" stroke="#1a78ae" stroke-width="1"/><path d="M5.5 3.2 V7.8" stroke="#1a78ae" stroke-width="1"/></svg>
<svg style="position:absolute;left:852.5px;top:56.5px" width="14" height="14" viewBox="0 0 14 14"><circle cx="5.5" cy="5.5" r="4.2" stroke="#1a78ae" stroke-width="1.6" fill="none"/><path d="M8.6 8.6 L12 12" stroke="#1a78ae" stroke-width="2" stroke-linecap="round"/><path d="M3.2 5.5 H7.8" stroke="#1a78ae" stroke-width="1"/></svg>
<svg style="position:absolute;left:874px;top:57px" width="12" height="12" viewBox="0 0 12 12"><path d="M1.6 4.8 A4.6 4.6 0 0 1 9.9 3.2" stroke="#1a78ae" stroke-width="1.8" fill="none"/><path d="M10.8 0.6 V5 H6.4Z" fill="#1a78ae"/><path d="M10.4 7.2 A4.6 4.6 0 0 1 2.1 8.8" stroke="#1a78ae" stroke-width="1.8" fill="none"/><path d="M1.2 11.4 V7 H5.6Z" fill="#1a78ae"/></svg>
<div style="position:absolute;left:901px;top:56px;width:1.5px;height:16px;background:#cdbfa8"></div>
<div style="position:absolute;left:912px;top:51px;width:87px;height:22px;border:1.5px solid #1a78ae;border-radius:3px;box-sizing:border-box;background:#fff"></div>
<div class="t" style="left:918.4px;top:56.70px;font-size:12.4px;color:#1a78ae;">Orientation</div>
<svg style="position:absolute;left:985px;top:62px" width="9" height="5"><path d="M0 0.3 H8 L4 4.5Z" fill="#1a78ae"/></svg>
<div style="position:absolute;left:1009px;top:56px;width:1.5px;height:16px;background:#cdbfa8"></div>
<div style="position:absolute;left:1017px;top:52px;width:162px;height:22px;border:1.5px solid #1a78ae;border-radius:3px;box-sizing:border-box;background:#fff"></div>
<div style="position:absolute;left:1163px;top:53px;width:15px;height:20px;background:#cdcdcd;border-right:2px solid #6b6b6b;border-bottom:2px solid #6b6b6b;box-sizing:border-box;"></div>
<svg style="position:absolute;left:1166px;top:60px" width="8" height="5"><path d="M0 0.3 H7 L3.5 4Z" fill="#111"/></svg>
<div class="t" style="left:1022px;top:56.80px;font-size:13px;color:#333;">surfaces</div>
<div style="position:absolute;left:1182px;top:51px;width:93px;height:22px;border:1.5px solid #1a78ae;border-radius:3px;box-sizing:border-box;background:#fff"></div>
<div style="position:absolute;left:1182px;top:51px;width:24px;height:22px;border:1.5px solid #c4c4c4;border-radius:4px 0 0 4px;box-sizing:border-box;background:linear-gradient(#e6e6e6,#d2d2d2)"></div>
<div style="position:absolute;left:1228px;top:51px;width:1.5px;height:22px;background:#1a78ae"></div>
<div style="position:absolute;left:1251px;top:51px;width:1.5px;height:22px;background:#1a78ae"></div>
<svg style="position:absolute;left:1187px;top:57px" width="14" height="14" viewBox="0 0 14 14"><path d="M6.3 1.5 L1.6 8.8 L2.9 11.4 L11.6 9.2 Z" fill="#f00"/><path d="M6.3 1.5 L1.6 8.8 L2.9 11.4 L11.6 9.2 Z M6.3 1.5 L2.9 11.4 M1.6 8.8 Q7 8 11.6 9.2" stroke="#111" stroke-width="0.9" fill="none"/><circle cx="1.6" cy="8.8" r="1" fill="#000"/><circle cx="2.9" cy="11.4" r="1" fill="#000"/><circle cx="11.6" cy="9.2" r="1" fill="#000"/><circle cx="6.3" cy="1.5" r="0.8" fill="#000"/></svg>
<svg style="position:absolute;left:1210px;top:57px" width="14" height="14" viewBox="0 0 14 14"><path d="M6.3 1.5 L4.5 11 L7.3 10.3 Z" fill="#f00"/><path d="M6.3 1.5 L1.6 8.8 L2.9 11.4 L11.6 9.2 Z M6.3 1.5 L2.9 11.4 M1.6 8.8 Q7 8 11.6 9.2" stroke="#111" stroke-width="0.9" fill="none"/><circle cx="1.6" cy="8.8" r="1" fill="#000"/><circle cx="2.9" cy="11.4" r="1" fill="#000"/><circle cx="11.6" cy="9.2" r="1" fill="#000"/><circle cx="6.3" cy="1.5" r="0.8" fill="#000"/></svg>
<svg style="position:absolute;left:1233px;top:57px" width="14" height="14" viewBox="0 0 14 14"><path d="M6.3 1.5 L3 11 L3.8 11 Z" fill="#f00"/><path d="M6.3 1.5 L1.6 8.8 L2.9 11.4 L11.6 9.2 Z M6.3 1.5 L2.9 11.4 M1.6 8.8 Q7 8 11.6 9.2" stroke="#111" stroke-width="0.9" fill="none"/><circle cx="1.6" cy="8.8" r="1" fill="#000"/><circle cx="2.9" cy="11.4" r="1" fill="#000"/><circle cx="11.6" cy="9.2" r="1" fill="#000"/><circle cx="6.3" cy="1.5" r="0.8" fill="#000"/></svg>
<svg style="position:absolute;left:1256px;top:57px" width="14" height="14" viewBox="0 0 14 14"><path d="M6.3 1.5 L1.6 8.8 L2.9 11.4 L11.6 9.2 Z M6.3 1.5 L2.9 11.4 M1.6 8.8 Q7 8 11.6 9.2" stroke="#111" stroke-width="0.9" fill="none"/><circle cx="1.6" cy="8.8" r="1" fill="#000"/><circle cx="2.9" cy="11.4" r="1" fill="#000"/><circle cx="11.6" cy="9.2" r="1" fill="#000"/><circle cx="6.3" cy="1.5" r="0.8" fill="#000"/><circle cx="6.3" cy="2.2" r="1.9" fill="#f00"/></svg>
<div style="position:absolute;left:1285px;top:56px;width:1.5px;height:16px;background:#cdbfa8"></div>
<div style="position:absolute;left:1296px;top:51px;width:73px;height:22px;border:1.5px solid #1a78ae;border-radius:3px;box-sizing:border-box;background:#fff"></div>
<div class="t" style="left:1301.9px;top:57.38px;font-size:11.6px;color:#1a78ae;">Selection</div>
<svg style="position:absolute;left:1355px;top:62px" width="9" height="5"><path d="M0 0.3 H8 L4 4.5Z" fill="#1a78ae"/></svg>
<div style="position:absolute;left:1375px;top:51px;width:47px;height:22px;border:1.5px solid #1a78ae;border-radius:3px;box-sizing:border-box;background:#fff"></div>
<div style="position:absolute;left:1398px;top:51px;width:1.5px;height:22px;background:#1a78ae"></div>
<svg style="position:absolute;left:1380px;top:58px" width="14" height="11" viewBox="0 0 14 11"><path d="M1 5 C 3.5 0.6, 10.5 0.6, 13 5 C 10.5 9.4, 3.5 9.4, 1 5 Z" stroke="#1a78ae" stroke-width="1.2" fill="none"/><path d="M7.6 2.2 A2.6 2.6 0 0 0 5.6 7.2 Z" fill="#1a78ae"/><path d="M9.6 0.6 L4.8 9.8" stroke="#1a78ae" stroke-width="1.6"/></svg>
<svg style="position:absolute;left:1403px;top:58px" width="14" height="11" viewBox="0 0 14 11"><path d="M1 5 C 3.5 0.6, 10.5 0.6, 13 5 C 10.5 9.4, 3.5 9.4, 1 5 Z" stroke="#1a78ae" stroke-width="1.3" fill="none"/><circle cx="7.2" cy="4.7" r="2.4" fill="#1a78ae"/></svg>
<div style="position:absolute;left:1432px;top:56px;width:1.5px;height:16px;background:#cdbfa8"></div>
<div style="position:absolute;left:1440px;top:51px;width:64px;height:22px;border:1.5px solid #1a78ae;border-radius:3px;box-sizing:border-box;background:#fff"></div>
<div class="t" style="left:1446.5px;top:57.72px;font-size:11.2px;color:#1a78ae;">Create set</div>
<div style="position:absolute;left:1507px;top:51px;width:53px;height:22px;border:1.5px solid #1a78ae;border-radius:3px;box-sizing:border-box;background:#fff"></div>
<div class="t" style="left:1513.4px;top:57.93px;font-size:11.9px;color:#1a78ae;">Filter</div>
<svg style="position:absolute;left:1546px;top:62px" width="9" height="5"><path d="M0 0.3 H8 L4 4.5Z" fill="#1a78ae"/></svg>
<div style="position:absolute;left:1646px;top:113px;width:240px;height:220px;border:1px solid #b9dcec;border-radius:4px;box-sizing:border-box;background:rgba(250,250,250,0.35)"></div>
<div style="position:absolute;left:1659px;top:128px;width:9px;height:9px;box-sizing:border-box;border:1.2px solid #7079b8;border-radius:2px;background:linear-gradient(#fff,#e2e4ec)"></div><div style="position:absolute;left:1661px;top:132px;width:5px;height:1.2px;background:#1a1acc"></div>
<div class="t" style="left:1671.1px;top:127.39px;font-size:11px;color:#5c9cc4;">Scene</div>
<div style="position:absolute;left:1675px;top:147.5px;width:9px;height:9px;box-sizing:border-box;border:1.2px solid #7079b8;border-radius:2px;background:linear-gradient(#fff,#e2e4ec)"></div><div style="position:absolute;left:1677px;top:151.5px;width:5px;height:1.2px;background:#1a1acc"></div>
<div class="t" style="left:1687.3px;top:146.47px;font-size:10.9px;color:#5c9cc4;">Seal_geometry_1Deg mesh</div>
<div style="position:absolute;left:1691px;top:167.5px;width:9px;height:9px;box-sizing:border-box;border:1.2px solid #7079b8;border-radius:2px;background:linear-gradient(#fff,#e2e4ec)"></div><div style="position:absolute;left:1693px;top:171.5px;width:5px;height:1.2px;background:#1a1acc"></div><div style="position:absolute;left:1694.9px;top:169.5px;width:1.2px;height:5px;background:#1a1acc"></div>
<svg style="position:absolute;left:1704px;top:167.5px" width="13" height="9" viewBox="0 0 13 9"><ellipse cx="6.5" cy="4.5" rx="6" ry="3.6" fill="#8a8f8a"/><ellipse cx="6.5" cy="4.5" rx="4.2" ry="2.3" fill="#e8e8e8"/><circle cx="6.5" cy="4.3" r="2.2" fill="#7a7f7a"/></svg>
<div class="t" style="left:1721px;top:166.19px;font-size:11px;color:#5c9cc4;">volumeOnGeoVolumes_1</div>
<div style="position:absolute;left:1691px;top:187.3px;width:9px;height:9px;box-sizing:border-box;border:1.2px solid #7079b8;border-radius:2px;background:linear-gradient(#fff,#e2e4ec)"></div><div style="position:absolute;left:1693px;top:191.3px;width:5px;height:1.2px;background:#1a1acc"></div><div style="position:absolute;left:1694.9px;top:189.3px;width:1.2px;height:5px;background:#1a1acc"></div>
<svg style="position:absolute;left:1704px;top:187.3px" width="13" height="9" viewBox="0 0 13 9"><ellipse cx="6.5" cy="4.5" rx="6" ry="3.6" fill="#8a8f8a"/><ellipse cx="6.5" cy="4.5" rx="4.2" ry="2.3" fill="#e8e8e8"/><circle cx="6.5" cy="4.3" r="2.2" fill="#7a7f7a"/></svg>
<div class="t" style="left:1721px;top:185.99px;font-size:11px;color:#5c9cc4;">volumeOnGeoVolumes_0</div>
<div style="position:absolute;left:1691px;top:207px;width:9px;height:9px;box-sizing:border-box;border:1.2px solid #7079b8;border-radius:2px;background:linear-gradient(#fff,#e2e4ec)"></div><div style="position:absolute;left:1693px;top:211px;width:5px;height:1.2px;background:#1a1acc"></div>
<div class="t" style="left:1703.2px;top:205.79px;font-size:11px;color:#5c9cc4;">Topological Entity Sets</div>
<div class="t" style="left:1726.5px;top:228.72px;font-size:10.85px;color:#5c9cc4;">Symmetry BC set</div>
<div class="t" style="left:1726.5px;top:254.72px;font-size:10.85px;color:#5c9cc4;">Rigid - seal contact</div>
<div class="t" style="left:1726.5px;top:281.02px;font-size:10.85px;color:#5c9cc4;">Seal displacement BC set</div>
<div class="t" style="left:1726.5px;top:306.62px;font-size:10.85px;color:#5c9cc4;">Seal - rigid contact</div>
<svg style="position:absolute;left:1871px;top:320px" width="9" height="9"><path d="M8 1 L1 8 H8Z" fill="#999"/></svg>
<svg style="position:absolute;left:850px;top:880px" width="100" height="60" viewBox="850 880 100 60">
<path d="M902.7 898.7 L880 918.5" stroke="#d42020" stroke-width="2"/><path d="M875.4 924.6 L880.5 913.5 L885.5 919Z" fill="#d42020"/>
<path d="M902.7 898.7 L923 922" stroke="#6a6ae0" stroke-width="1.8"/><path d="M926.4 926.8 L916.5 922 L922.5 916.5Z" fill="#6a6ae0"/>
<path d="M902.7 898.7 L890.5 903.9" stroke="#3aa03a" stroke-width="1.8"/><circle cx="890.2" cy="903.9" r="2.2" fill="#3aa03a"/>
<text x="860.5" y="932" textLength="16" lengthAdjust="spacingAndGlyphs" font-family="Liberation Sans" font-weight="bold" font-style="italic" font-size="25" fill="#e01818">X</text>
<text x="881.5" y="906" textLength="11" lengthAdjust="spacingAndGlyphs" font-family="Liberation Sans" font-weight="bold" font-style="italic" font-size="18" fill="#40c040">Y</text>
<text x="923.5" y="934.2" textLength="14" lengthAdjust="spacingAndGlyphs" font-family="Liberation Sans" font-weight="bold" font-style="italic" font-size="23" fill="#6a6ae8">Z</text>
</svg>
<div style="position:absolute;left:832px;top:945px;width:198px;height:10px;border:1px solid #c6dde6;border-radius:4px;background:#e4e4e4"></div>
</body></html>
